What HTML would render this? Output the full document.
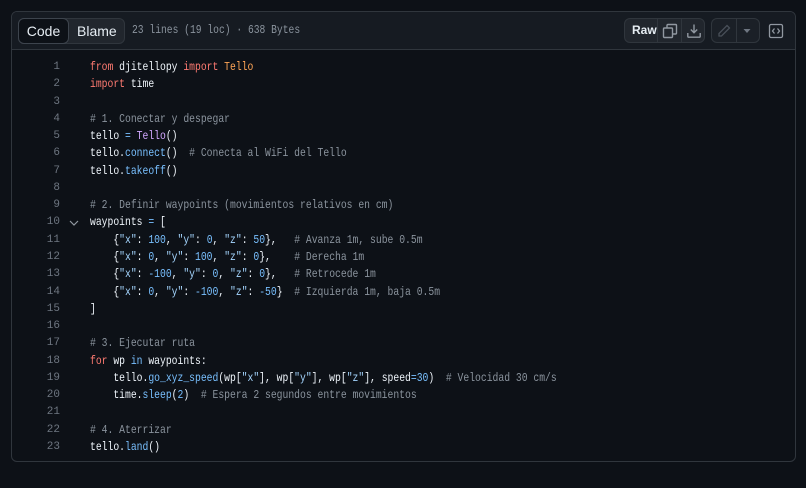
<!DOCTYPE html>
<html><head><meta charset="utf-8"><style>
*{margin:0;padding:0;box-sizing:border-box}
body{width:806px;height:488px;background:#0d1117;font-family:"Liberation Sans",sans-serif;overflow:hidden;position:relative}
.box{position:absolute;left:11px;top:11px;width:785px;height:451px;border:1px solid #30363d;border-radius:6px;background:#0d1117;overflow:hidden}
.hdr{height:38px;background:#161b22;border-bottom:1px solid #30363d;position:relative}
.seg{position:absolute;left:6px;top:6px;height:26px;width:107px;background:#21262d;border-radius:6px;border:1px solid #30363d}
.seg .c{position:absolute;left:-1px;top:-1px;width:51px;height:26px;background:#0d1117;border:1px solid #3d444d;border-radius:6px;color:#e6edf3;font-size:14px;text-align:center;line-height:24px}
.seg .b{position:absolute;left:58px;top:0;color:#e6edf3;font-size:14px;line-height:24px}
.meta{position:absolute;left:120px;top:0;line-height:38px;color:#8b949e;font-family:"Liberation Mono",monospace;font-size:11.5px;white-space:pre;transform:scaleX(0.84);transform-origin:0 0}
.grp{position:absolute;top:6px;height:25px;background:#21262d;border:1px solid #30363d;border-radius:6px}
.grp .d{position:absolute;top:0;width:1px;height:23px;background:#30363d}
.raw{position:absolute;left:7px;top:0;line-height:23px;color:#e6edf3;font-size:12px;font-weight:bold}
svg{position:absolute}
.code{position:absolute;left:0;top:47px;color:#e6edf3}
.ln{position:absolute;width:48px;text-align:right;color:#6e7681;height:17.27px;line-height:17.27px;left:0;font-family:"Liberation Mono",monospace;font-size:11px}
.l{position:absolute;left:78px;height:17.27px;line-height:17.27px;white-space:pre;font-family:"Liberation Mono",monospace;font-size:12px;transform:scaleX(0.81);transform-origin:0 0;color:#f0f6fc}
.k{color:#ff7b72}.o{color:#ffa657}.p{color:#d2a8ff}.f{color:#79c0ff}.n{color:#79c0ff}.s{color:#a5d6ff}.cm{color:#8b949e}
</style></head><body>
<div class="box">
<div class="hdr">
 <div class="seg"><div class="c">Code</div><div class="b">Blame</div></div>
 <div class="meta">23 lines (19 loc) · 638 Bytes</div>
 <div class="grp" style="left:612px;width:81px">
  <div class="raw">Raw</div><div class="d" style="left:32px"></div><div class="d" style="left:56px"></div>
  <svg style="left:37px;top:4px" width="16" height="16" viewBox="0 0 16 16" fill="none" stroke="#9198a1" stroke-width="1.4"><rect x="1.5" y="5" width="9" height="9.5" rx="1"/><path d="M5 5V2.5a1 1 0 0 1 1-1h7.5a1 1 0 0 1 1 1V10a1 1 0 0 1-1 1H10.5"/></svg>
  <svg style="left:61px;top:4px" width="16" height="16" viewBox="0 0 16 16" fill="none" stroke="#9198a1" stroke-width="1.4"><path d="M8 1.5v8M4.8 6.5 8 9.7l3.2-3.2M1.8 10v3.2a1 1 0 0 0 1 1h10.4a1 1 0 0 0 1-1V10"/></svg>
 </div>
 <div class="grp" style="left:699px;width:49px;background:#1b2027">
  <div class="d" style="left:24px"></div>
  <svg style="left:4px;top:4px" width="16" height="16" viewBox="0 0 16 16" fill="none" stroke="#484f58" stroke-width="1.3"><path d="M11 2.5l2.5 2.5L5.5 13H3v-2.5z"/></svg>
  <svg style="left:30px;top:9px" width="10" height="6" viewBox="0 0 10 6"><path d="M1.5 1h7L5 5z" fill="#6e7681"/></svg>
 </div>
 <svg style="left:756px;top:11px" width="16" height="16" viewBox="0 0 16 16" fill="none" stroke="#9198a1" stroke-width="1.3"><rect x="1.5" y="1.5" width="13" height="13" rx="1.5"/><path d="M6.5 5.5 4.5 8l2 2.5M9.5 5.5 11.5 8l-2 2.5"/></svg>
</div>
<div class="code">
<div class="ln" style="top:0">1</div><div class="l" style="top:0"><span class="k">from</span> djitellopy <span class="k">import</span> <span class="o">Tello</span></div>
<div class="ln" style="top:17.27px">2</div><div class="l" style="top:17.27px"><span class="k">import</span> time</div>
<div class="ln" style="top:34.54px">3</div>
<div class="ln" style="top:51.81px">4</div><div class="l cm" style="top:51.81px"># 1. Conectar y despegar</div>
<div class="ln" style="top:69.08px">5</div><div class="l" style="top:69.08px">tello <span class="f">=</span> <span class="p">Tello</span>()</div>
<div class="ln" style="top:86.35px">6</div><div class="l" style="top:86.35px">tello.<span class="f">connect</span>()  <span class="cm"># Conecta al WiFi del Tello</span></div>
<div class="ln" style="top:103.62px">7</div><div class="l" style="top:103.62px">tello.<span class="f">takeoff</span>()</div>
<div class="ln" style="top:120.89px">8</div>
<div class="ln" style="top:138.16px">9</div><div class="l cm" style="top:138.16px"># 2. Definir waypoints (movimientos relativos en cm)</div>
<div class="ln" style="top:155.43px">10</div><svg style="left:57px;top:161px" width="10" height="6" viewBox="0 0 10 6" fill="none" stroke="#9198a1" stroke-width="1.2"><path d="M1 1l4 4 4-4"/></svg><div class="l" style="top:155.43px">waypoints <span class="f">=</span> [</div>
<div class="ln" style="top:172.7px">11</div><div class="l" style="top:172.7px">    {<span class="s">"x"</span>: <span class="n">100</span>, <span class="s">"y"</span>: <span class="n">0</span>, <span class="s">"z"</span>: <span class="n">50</span>},   <span class="cm"># Avanza 1m, sube 0.5m</span></div>
<div class="ln" style="top:189.97px">12</div><div class="l" style="top:189.97px">    {<span class="s">"x"</span>: <span class="n">0</span>, <span class="s">"y"</span>: <span class="n">100</span>, <span class="s">"z"</span>: <span class="n">0</span>},    <span class="cm"># Derecha 1m</span></div>
<div class="ln" style="top:207.24px">13</div><div class="l" style="top:207.24px">    {<span class="s">"x"</span>: <span class="n">-100</span>, <span class="s">"y"</span>: <span class="n">0</span>, <span class="s">"z"</span>: <span class="n">0</span>},   <span class="cm"># Retrocede 1m</span></div>
<div class="ln" style="top:224.51px">14</div><div class="l" style="top:224.51px">    {<span class="s">"x"</span>: <span class="n">0</span>, <span class="s">"y"</span>: <span class="n">-100</span>, <span class="s">"z"</span>: <span class="n">-50</span>}  <span class="cm"># Izquierda 1m, baja 0.5m</span></div>
<div class="ln" style="top:241.78px">15</div><div class="l" style="top:241.78px">]</div>
<div class="ln" style="top:259.05px">16</div>
<div class="ln" style="top:276.32px">17</div><div class="l cm" style="top:276.32px"># 3. Ejecutar ruta</div>
<div class="ln" style="top:293.59px">18</div><div class="l" style="top:293.59px"><span class="k">for</span> wp <span class="f">in</span> waypoints:</div>
<div class="ln" style="top:310.86px">19</div><div class="l" style="top:310.86px">    tello.<span class="f">go_xyz_speed</span>(wp[<span class="s">"x"</span>], wp[<span class="s">"y"</span>], wp[<span class="s">"z"</span>], speed<span class="f">=</span><span class="n">30</span>)  <span class="cm"># Velocidad 30 cm/s</span></div>
<div class="ln" style="top:328.13px">20</div><div class="l" style="top:328.13px">    time.<span class="f">sleep</span>(<span class="n">2</span>)  <span class="cm"># Espera 2 segundos entre movimientos</span></div>
<div class="ln" style="top:345.4px">21</div>
<div class="ln" style="top:362.67px">22</div><div class="l cm" style="top:362.67px"># 4. Aterrizar</div>
<div class="ln" style="top:379.94px">23</div><div class="l" style="top:379.94px">tello.<span class="f">land</span>()</div>
</div>
</div>
</body></html>
